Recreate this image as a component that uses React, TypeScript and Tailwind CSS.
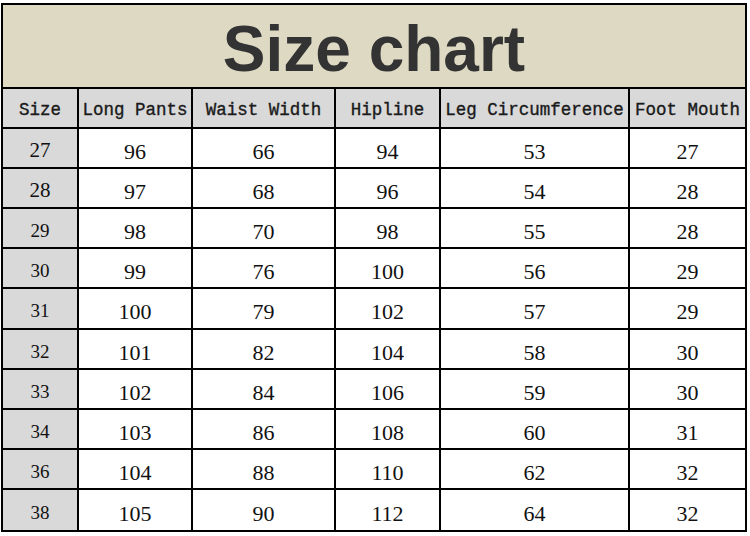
import React from "react";

const headers = ["Size", "Long Pants", "Waist Width", "Hipline", "Leg Circumference", "Foot Mouth"];
const rows: string[][] = [
  ["27", "96", "66", "94", "53", "27"],
  ["28", "97", "68", "96", "54", "28"],
  ["29", "98", "70", "98", "55", "28"],
  ["30", "99", "76", "100", "56", "29"],
  ["31", "100", "79", "102", "57", "29"],
  ["32", "101", "82", "104", "58", "30"],
  ["33", "102", "84", "106", "59", "30"],
  ["34", "103", "86", "108", "60", "31"],
  ["36", "104", "88", "110", "62", "32"],
  ["38", "105", "90", "112", "64", "32"],
];

const widths = ["w-[76px]", "w-[114px]", "w-[143px]", "w-[105px]", "w-[189px]", "w-[115px]"];
const rowH = ["h-[40px]", "h-[40px]", "h-[40px]", "h-[40px]", "h-[41px]", "h-[40px]", "h-[40px]", "h-[40px]", "h-[40px]", "h-[40px]"];

export default function App() {
  return (
    <div className="w-[750px] h-[536px] bg-white pt-[3px] pl-[1px]">
      <div className="w-[746px] border-2 border-black flex flex-col">
        <div className="h-[84px] bg-[#ddd9c3] border-b-2 border-black flex items-center justify-center">
          <span
            className="text-[64px] font-bold text-[#333333] leading-none mt-[5px]"
            style={{ fontFamily: '"Liberation Sans", Arial, sans-serif' }}
          >
            Size chart
          </span>
        </div>
        <div className="flex h-[40px] border-b-2 border-black bg-[#d9d9d9]">
          {headers.map((h, i) => (
            <div
              key={h}
              className={`${widths[i]} ${i < 5 ? "border-r-2 border-black" : ""} flex items-center justify-center pt-[4px] text-[17.5px] text-[#1a1a1a] whitespace-nowrap [-webkit-text-stroke:0.35px_#1a1a1a]`}
              style={{ fontFamily: '"Liberation Mono", "Courier New", monospace' }}
            >
              {h}
            </div>
          ))}
        </div>
        {rows.map((r, ri) => (
          <div key={ri} className={`flex ${rowH[ri]} ${ri < rows.length - 1 ? "border-b-2 border-black" : ""}`}>
            {r.map((c, ci) => (
              <div
                key={ci}
                className={`${widths[ci]} ${ci < 5 ? "border-r-2 border-black" : ""} ${
                  ci === 0
                    ? ri < 2
                      ? "bg-[#d9d9d9] text-[21px]"
                      : "bg-[#d9d9d9] text-[19px]"
                    : "bg-white text-[22px]"
                } flex items-center justify-center pt-[6px] text-[#111]`}
                style={{ fontFamily: '"Liberation Serif", "Times New Roman", serif' }}
              >
                {c}
              </div>
            ))}
          </div>
        ))}
      </div>
    </div>
  );
}
